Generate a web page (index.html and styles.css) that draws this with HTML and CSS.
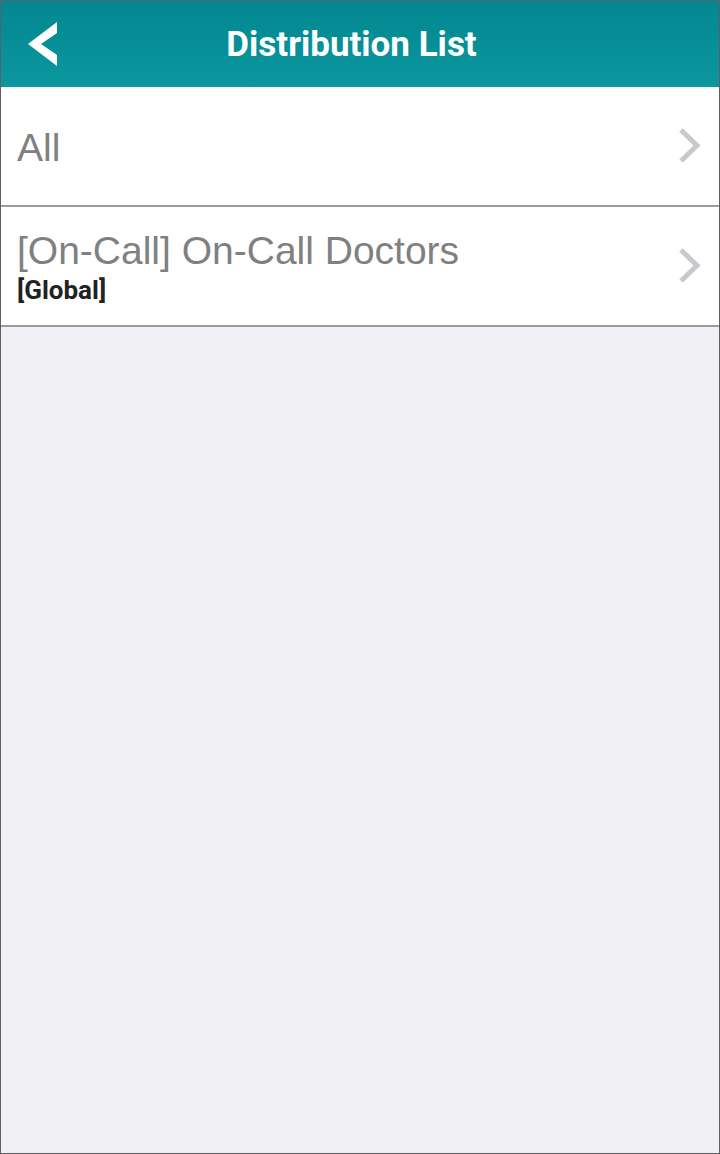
FILE: index.html
```html
<!DOCTYPE html>
<html lang="en">
  <head>
    <meta charset="utf-8" />
    <meta name="viewport" content="width=device-width, initial-scale=1.0" />
    <link rel="stylesheet" href="styles.css">
    <title>Distribution List</title>
  </head>
  <body>
    <div id="frame">
      <div class="header">
        <a class="back" href="#">
          <svg width="34" height="44" viewBox="0 0 34 44">
            <polygon points="31,0 31,11 15,22 31,33 31,44 2,22" fill="#ffffff" />
          </svg>
        </a>
        <h1 class="title">Distribution List</h1>
      </div>
      <div class="list">
        <a class="row" href="#">
          <div class="rowText">
            <div class="rowTitle">All</div>
          </div>
          <svg class="chevron" width="26" height="36" viewBox="0 0 26 36">
            <polyline points="4,2 20,17.5 4,33" fill="none" stroke="#c8c8cd" stroke-width="5" />
          </svg>
        </a>
        <a class="row" href="#">
          <div class="rowText">
            <div class="rowTitle">[On-Call] On-Call Doctors</div>
            <div class="rowSub">[Global]</div>
          </div>
          <svg class="chevron" width="26" height="36" viewBox="0 0 26 36">
            <polyline points="4,2 20,17.5 4,33" fill="none" stroke="#c8c8cd" stroke-width="5" />
          </svg>
        </a>
      </div>
    </div>
  </body>
</html>
```

FILE: styles.css
```css
html,
body {
  margin: 0px;
  padding: 0px;
}
#frame {
  width: 720px;
  height: 1154px;
  box-sizing: border-box;
  border: 1px solid #5f5f5f;
  background-color: #efeff4;
  overflow: hidden;
}
.header {
  height: 86px;
  display: flex;
  align-items: center;
  background: linear-gradient(#018790, #0c979f);
  padding-left: 25px;
}
.back {
  display: flex;
  width: 34px;
}
.title {
  flex: 1;
  margin: 0px;
  padding-right: 76px;
  text-align: center;
  color: #ffffff;
  font-family: Roboto, sans-serif;
  font-weight: 700;
  font-size: 35px;
}
.list {
  background-color: #ffffff;
}
.row {
  display: flex;
  align-items: center;
  justify-content: space-between;
  min-height: 118px;
  padding: 0px 16px 0px 16px;
  border-bottom: 2px solid #9b9b9b;
  text-decoration: none;
}
.rowText {
  display: flex;
  flex-direction: column;
  padding-top: 3px;
}
.rowTitle {
  font-family: "Liberation Sans", Arial, sans-serif;
  font-size: 39px;
  line-height: 44px;
  color: #808080;
}
.rowSub {
  font-family: Roboto, sans-serif;
  font-weight: 700;
  font-size: 26px;
  line-height: 32px;
  margin-top: 1px;
  color: #222222;
}
.chevron {
  flex-shrink: 0;
}
```
